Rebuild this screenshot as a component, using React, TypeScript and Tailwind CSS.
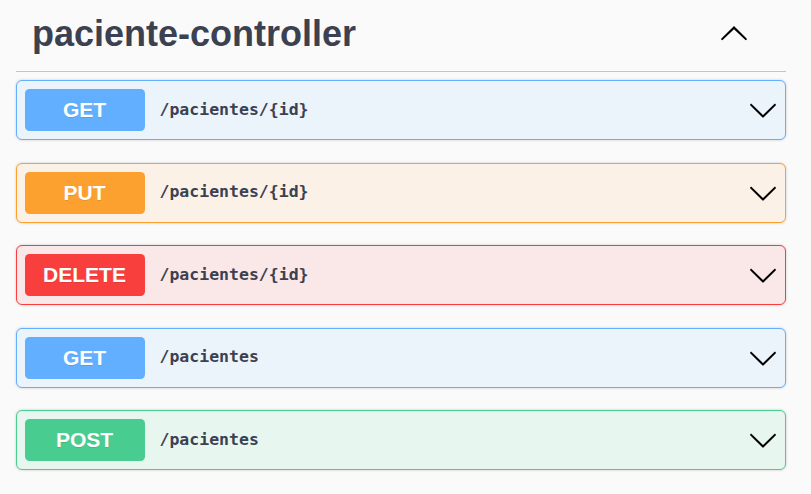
const ops = [
  { method: 'GET', path: '/pacientes/{id}', badge: 'bg-[#61affe]', row: 'border-[#61affe] bg-[#ebf3fb]' },
  { method: 'PUT', path: '/pacientes/{id}', badge: 'bg-[#fca130]', row: 'border-[#fca130] bg-[#fbf1e6]' },
  { method: 'DELETE', path: '/pacientes/{id}', badge: 'bg-[#f93e3e]', row: 'border-[#f93e3e] bg-[#fae7e7]' },
  { method: 'GET', path: '/pacientes', badge: 'bg-[#61affe]', row: 'border-[#61affe] bg-[#ebf3fb]' },
  { method: 'POST', path: '/pacientes', badge: 'bg-[#49cc90]', row: 'border-[#49cc90] bg-[#e8f6f0]' },
];

const Arrow = ({ up = false }: { up?: boolean }) => (
  <svg
    viewBox="0 0 20 20"
    className={up ? 'w-[30px] h-[30px] shrink-0 rotate-180' : 'w-[30px] h-[30px] shrink-0'}
    fill="currentColor"
  >
    <path d="M17.418 6.109c.272-.268.709-.268.979 0s.271.701 0 .969l-7.908 7.83c-.27.268-.707.268-.979 0l-7.908-7.83c-.27-.268-.27-.701 0-.969.271-.268.709-.268.979 0L10 13.25l7.418-7.141z" />
  </svg>
);

const App = () => {
  return (
    <div className="w-[811px] h-[494px] bg-[#fafafa] pl-4 pr-[25px] overflow-hidden font-['Liberation_Sans',Arial,sans-serif]">
      <div className="flex items-center justify-between pt-[14px] pb-[17px] pr-[37px] border-b border-[#c1c3c7]">
        <h3 className="pl-4 text-[36px] leading-[40px] font-bold text-[#3b4151]">paciente-controller</h3>
        <span className="text-black">
          <Arrow up />
        </span>
      </div>

      <div className="mt-2 flex flex-col gap-[22.5px]">
        {ops.map((op, i) => (
          <div
            key={i}
            className={`h-[60px] flex items-center px-[7.5px] border rounded-[6px] shadow-[0_0_3px_rgba(0,0,0,0.19)] ${op.row}`}
          >
            <span
              className={`w-[120px] h-[42px] flex items-center justify-center rounded-[4.5px] text-white text-[21px] font-bold [text-shadow:0_1px_0_rgba(0,0,0,0.1)] ${op.badge}`}
            >
              {op.method}
            </span>
            <span className="flex-1 pl-[15px] text-[16.5px] font-bold text-[#3b4151] font-['DejaVu_Sans_Mono',monospace]">
              {op.path}
            </span>
            <span className="text-black">
              <Arrow />
            </span>
          </div>
        ))}
      </div>
    </div>
  );
};

export default App;
